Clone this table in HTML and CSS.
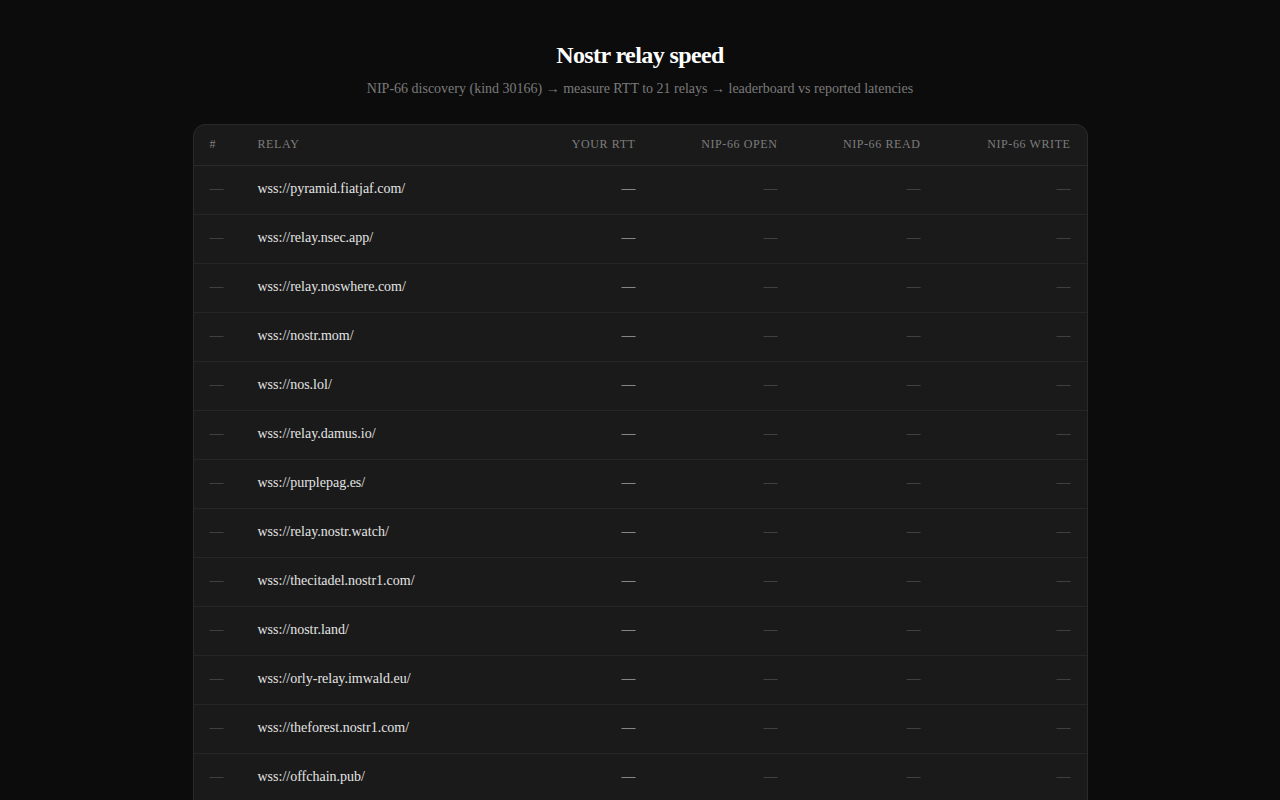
FILE: index.html
```html
<!DOCTYPE html>
<html lang="en">
<head>
<meta charset="utf-8">
<title>Nostr relay speed</title>
<link rel="stylesheet" href="styles.css">
</head>
<body>
<main class="page">
  <header class="intro">
    <h1 class="title">Nostr relay speed</h1>
    <p class="subtitle">NIP-66 discovery (kind 30166) → measure RTT to 21 relays → leaderboard vs reported latencies</p>
  </header>
  <section class="card">
    <table class="board">
      <colgroup>
        <col class="c-rank"><col class="c-relay"><col class="c-rtt"><col class="c-open"><col class="c-read"><col class="c-write">
      </colgroup>
      <thead>
        <tr><th class="left">#</th><th class="left">Relay</th><th>Your RTT</th><th>NIP-66 Open</th><th>NIP-66 Read</th><th>NIP-66 Write</th></tr>
      </thead>
      <tbody>
        <tr><td class="rank">—</td><td class="relay">wss://pyramid.fiatjaf.com/</td><td class="rtt">—</td><td class="nip">—</td><td class="nip">—</td><td class="nip">—</td></tr>
        <tr><td class="rank">—</td><td class="relay">wss://relay.nsec.app/</td><td class="rtt">—</td><td class="nip">—</td><td class="nip">—</td><td class="nip">—</td></tr>
        <tr><td class="rank">—</td><td class="relay">wss://relay.noswhere.com/</td><td class="rtt">—</td><td class="nip">—</td><td class="nip">—</td><td class="nip">—</td></tr>
        <tr><td class="rank">—</td><td class="relay">wss://nostr.mom/</td><td class="rtt">—</td><td class="nip">—</td><td class="nip">—</td><td class="nip">—</td></tr>
        <tr><td class="rank">—</td><td class="relay">wss://nos.lol/</td><td class="rtt">—</td><td class="nip">—</td><td class="nip">—</td><td class="nip">—</td></tr>
        <tr><td class="rank">—</td><td class="relay">wss://relay.damus.io/</td><td class="rtt">—</td><td class="nip">—</td><td class="nip">—</td><td class="nip">—</td></tr>
        <tr><td class="rank">—</td><td class="relay">wss://purplepag.es/</td><td class="rtt">—</td><td class="nip">—</td><td class="nip">—</td><td class="nip">—</td></tr>
        <tr><td class="rank">—</td><td class="relay">wss://relay.nostr.watch/</td><td class="rtt">—</td><td class="nip">—</td><td class="nip">—</td><td class="nip">—</td></tr>
        <tr><td class="rank">—</td><td class="relay">wss://thecitadel.nostr1.com/</td><td class="rtt">—</td><td class="nip">—</td><td class="nip">—</td><td class="nip">—</td></tr>
        <tr><td class="rank">—</td><td class="relay">wss://nostr.land/</td><td class="rtt">—</td><td class="nip">—</td><td class="nip">—</td><td class="nip">—</td></tr>
        <tr><td class="rank">—</td><td class="relay">wss://orly-relay.imwald.eu/</td><td class="rtt">—</td><td class="nip">—</td><td class="nip">—</td><td class="nip">—</td></tr>
        <tr><td class="rank">—</td><td class="relay">wss://theforest.nostr1.com/</td><td class="rtt">—</td><td class="nip">—</td><td class="nip">—</td><td class="nip">—</td></tr>
        <tr><td class="rank">—</td><td class="relay">wss://offchain.pub/</td><td class="rtt">—</td><td class="nip">—</td><td class="nip">—</td><td class="nip">—</td></tr>
        <tr><td class="rank">—</td><td class="relay">wss://relay.primal.net/</td><td class="rtt">—</td><td class="nip">—</td><td class="nip">—</td><td class="nip">—</td></tr>
        <tr><td class="rank">—</td><td class="relay">wss://relay.snort.social/</td><td class="rtt">—</td><td class="nip">—</td><td class="nip">—</td><td class="nip">—</td></tr>
        <tr><td class="rank">—</td><td class="relay">wss://nostr.wine/</td><td class="rtt">—</td><td class="nip">—</td><td class="nip">—</td><td class="nip">—</td></tr>
        <tr><td class="rank">—</td><td class="relay">wss://relay.nostr.band/</td><td class="rtt">—</td><td class="nip">—</td><td class="nip">—</td><td class="nip">—</td></tr>
        <tr><td class="rank">—</td><td class="relay">wss://nostr.oxtr.dev/</td><td class="rtt">—</td><td class="nip">—</td><td class="nip">—</td><td class="nip">—</td></tr>
        <tr><td class="rank">—</td><td class="relay">wss://relay.nostr.bg/</td><td class="rtt">—</td><td class="nip">—</td><td class="nip">—</td><td class="nip">—</td></tr>
        <tr><td class="rank">—</td><td class="relay">wss://nostr.bitcoiner.social/</td><td class="rtt">—</td><td class="nip">—</td><td class="nip">—</td><td class="nip">—</td></tr>
        <tr><td class="rank">—</td><td class="relay">wss://relay.mostr.pub/</td><td class="rtt">—</td><td class="nip">—</td><td class="nip">—</td><td class="nip">—</td></tr>
      </tbody>
    </table>
  </section>
</main>
</body>
</html>
```

FILE: styles.css
```css
html, body {
  margin: 0;
  padding: 0;
  background: #0c0c0c;
  color: #e6e6e6;
  font-family: "Liberation Serif", "Times New Roman", serif;
}

.page {
  max-width: 895px;
  margin: 0 auto;
  padding: 40px 0 40px;
}

.intro {
  text-align: center;
}

.title {
  margin: 0;
  font-size: 24px;
  line-height: 30px;
  font-weight: 700;
  color: #ffffff;
  letter-spacing: -0.6px;
}

.subtitle {
  margin: 9px 0 0;
  font-size: 14px;
  line-height: 20px;
  color: #7a7a7a;
}

.card {
  margin-top: 25px;
  background: #1a1a1a;
  border: 1px solid #2a2a2a;
  border-radius: 12px;
  overflow: hidden;
}

.board {
  width: 100%;
  border-collapse: collapse;
  table-layout: fixed;
}

.c-rank { width: 48px; }
.c-rtt { width: 110px; }
.c-open { width: 142px; }
.c-read { width: 143px; }
.c-write { width: 150px; }

.board th {
  height: 38px;
  padding: 0 16px 2px;
  font-size: 12px;
  font-weight: 400;
  letter-spacing: 0.6px;
  text-transform: uppercase;
  color: #7d7d7d;
  text-align: right;
  border-bottom: 1px solid #2a2a2a;
  white-space: nowrap;
}

.board th.left {
  text-align: left;
}

.board td {
  height: 46px;
  padding: 0 16px 2px;
  font-size: 14px;
  border-bottom: 1px solid #262626;
  white-space: nowrap;
}

.rank {
  color: #5e5e5e;
}

.relay {
  color: #e4e4e4;
}

.rtt {
  text-align: right;
  color: #d0d0d0;
}

.nip {
  text-align: right;
  color: #5e5e5e;
}
```
